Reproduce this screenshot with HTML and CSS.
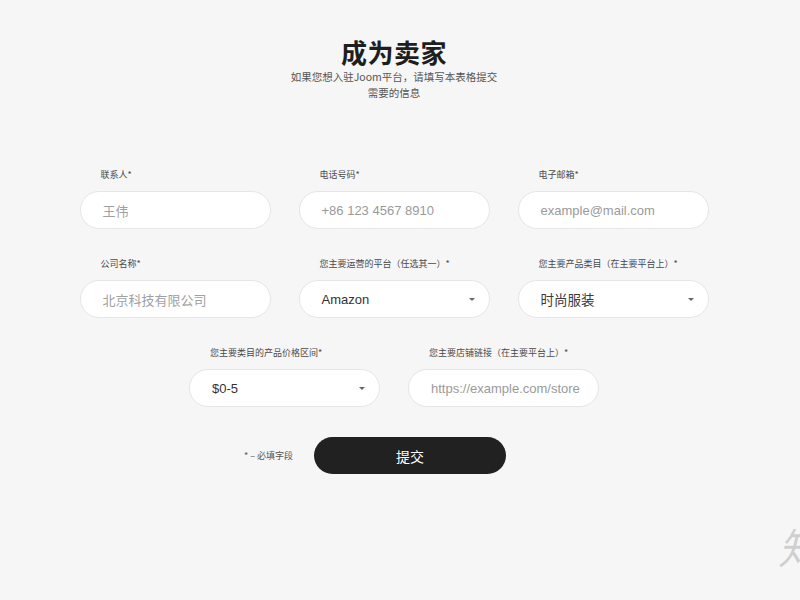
FILE: index.html
```html
<!DOCTYPE html>
<html lang="zh-CN">
<head>
<meta charset="utf-8">
<title>成为卖家</title>
<link rel="stylesheet" href="styles.css">
</head>
<body>
<main class="page">
  <h1 class="title">成为卖家</h1>
  <p class="subtitle">如果您想入驻Joom平台，请填写本表格提交<br>需要的信息</p>
  <form class="form">
    <div class="grid3">
      <div class="field">
        <label class="label">联系人*</label>
        <div class="input"><span class="ph ph-cjk">王伟</span></div>
      </div>
      <div class="field">
        <label class="label">电话号码*</label>
        <div class="input"><span class="ph">+86 123 4567 8910</span></div>
      </div>
      <div class="field">
        <label class="label">电子邮箱*</label>
        <div class="input"><span class="ph">example@mail.com</span></div>
      </div>
      <div class="field">
        <label class="label">公司名称*</label>
        <div class="input"><span class="ph ph-cjk">北京科技有限公司</span></div>
      </div>
      <div class="field">
        <label class="label">您主要运营的平台（任选其一）*</label>
        <div class="input select"><span class="val">Amazon</span><span class="caret"></span></div>
      </div>
      <div class="field">
        <label class="label">您主要产品类目（在主要平台上）*</label>
        <div class="input select"><span class="val val-cjk">时尚服装</span><span class="caret"></span></div>
      </div>
    </div>
    <div class="grid2">
      <div class="field">
        <label class="label">您主要类目的产品价格区间*</label>
        <div class="input select"><span class="val">$0-5</span><span class="caret"></span></div>
      </div>
      <div class="field">
        <label class="label">您主要店铺链接（在主要平台上）*</label>
        <div class="input"><span class="ph">https://example.com/store</span></div>
      </div>
    </div>
    <div class="submit-row">
      <span class="note">* – 必填字段</span>
      <button type="button" class="btn">提交</button>
    </div>
  </form>
</main>
<div class="watermark">知</div>
</body>
</html>
```

FILE: styles.css
```css
html, body {
  margin: 0;
  padding: 0;
}
body {
  background: #f6f6f6;
  font-family: "Liberation Sans", "Noto Sans CJK SC", Arial, sans-serif;
  color: #333;
  width: 800px;
  height: 600px;
  overflow: hidden;
  position: relative;
}
.page {
  width: 788px;
  padding-top: 36px;
}
.title {
  margin: 0;
  text-align: center;
  font-family: "Noto Sans CJK SC", sans-serif;
  font-size: 26px;
  line-height: 32px;
  font-weight: 700;
  color: #1e1e1e;
  letter-spacing: 0.5px;
}
.subtitle {
  margin: 1px 0 0;
  text-align: center;
  font-family: "Noto Sans CJK SC", sans-serif;
  font-size: 10.5px;
  line-height: 16px;
  color: #555;
}
.form {
  margin-top: 67px;
}
.grid3 {
  display: grid;
  grid-template-columns: repeat(3, 191px);
  column-gap: 28px;
  row-gap: 28px;
  justify-content: center;
}
.grid2 {
  display: grid;
  grid-template-columns: repeat(2, 191px);
  column-gap: 28px;
  justify-content: center;
  margin-top: 28px;
}
.field {
  display: flex;
  flex-direction: column;
}
.label {
  display: block;
  height: 14px;
  line-height: 14px;
  padding-left: 21px;
  margin-bottom: 9px;
  font-family: "Noto Sans CJK SC", sans-serif;
  font-size: 9px;
  color: #4a4a4a;
  white-space: nowrap;
}
.input {
  box-sizing: border-box;
  height: 38px;
  border: 1px solid #e6e6e6;
  border-radius: 19px;
  background: #fff;
  display: flex;
  align-items: center;
  padding: 0 14px 0 22px;
}
.ph {
  font-size: 13px;
  color: #9a9a9a;
  white-space: nowrap;
}
.ph-cjk {
  font-family: "Noto Sans CJK SC", sans-serif;
  font-size: 13px;
  color: #a0a0a0;
}
.select {
  justify-content: space-between;
}
.val {
  font-size: 13px;
  color: #333;
}
.val-cjk {
  font-family: "Noto Sans CJK SC", sans-serif;
  font-size: 13.5px;
  color: #3a3a3a;
}
.caret {
  width: 0;
  height: 0;
  border-left: 3px solid transparent;
  border-right: 3px solid transparent;
  border-top: 3px solid #666;
}
.submit-row {
  margin-top: 30px;
  display: flex;
  align-items: center;
  justify-content: center;
  gap: 21px;
  padding-right: 38px;
}
.note {
  font-family: "Noto Sans CJK SC", sans-serif;
  font-size: 9px;
  color: #555;
  white-space: nowrap;
}
.btn {
  width: 192px;
  height: 37px;
  border: none;
  border-radius: 19px;
  background: #212121;
  color: #fff;
  font-family: "Noto Sans CJK SC", sans-serif;
  font-size: 14px;
  cursor: pointer;
}
.watermark {
  position: absolute;
  left: 778px;
  top: 522px;
  font-family: "Noto Sans CJK SC", sans-serif;
  font-size: 42px;
  line-height: 48px;
  color: rgba(0, 0, 0, 0.16);
  font-style: italic;
}
```
